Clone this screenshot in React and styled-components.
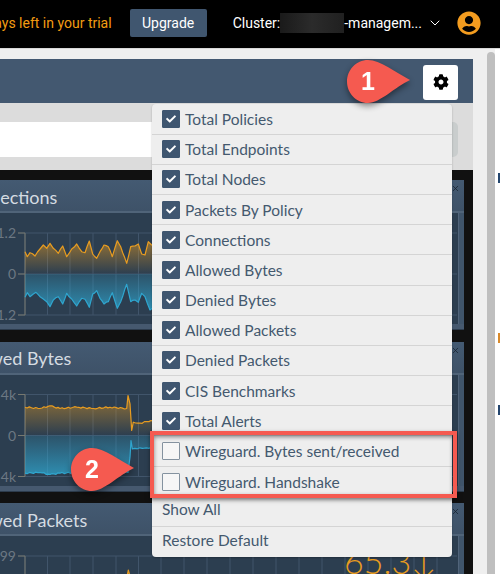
import styled, { createGlobalStyle } from 'styled-components';
import { FaCog, FaUserCircle, FaCheck } from 'react-icons/fa';
import { ChevronDown, X } from 'lucide-react';

const GlobalStyle = createGlobalStyle`
  html, body { margin: 0; padding: 0; background: #fff; }
  body { font-family: "Lato", "Noto Sans", sans-serif; }
`;

const connOrange = [[75,455],[82,470],[90,458],[105,468],[120,447],[130,435],[140,445],[150,430],[160,445],[175,460],[188,438],[200,470],[215,447],[230,432],[245,455],[255,458],[268,423],[278,462],[290,475],[300,455],[312,435],[325,440],[337,470],[352,422],[362,440],[380,490],[392,440],[405,438],[415,432],[425,462],[435,465],[445,425],[455,435],[480,450]];
const connBlue = [[75,592],[82,578],[90,590],[100,582],[108,577],[120,590],[130,597],[140,605],[150,620],[160,600],[175,590],[188,612],[200,580],[215,597],[230,618],[245,595],[255,598],[268,622],[278,582],[290,572],[300,595],[312,612],[325,605],[337,578],[352,625],[362,605],[380,553],[392,605],[405,600],[415,607],[425,580],[435,590],[450,630],[480,610]];
const bytesOrange = [[75,200],[120,204],[150,196],[180,204],[230,200],[280,204],[330,200],[380,204],[384,165],[390,190],[395,270],[400,245],[420,248],[440,243],[480,240]];
const bytesBlue = [[75,398],[120,396],[150,402],[180,398],[230,396],[280,398],[330,396],[384,396],[390,350],[393,300],[397,325],[420,322],[440,322],[480,320]];
const packetsOrange = [[75,718],[200,716],[380,716],[385,690],[392,716],[480,712]];

const menuItems = [
  'Total Policies', 'Total Endpoints', 'Total Nodes', 'Packets By Policy', 'Connections',
  'Allowed Bytes', 'Denied Bytes', 'Allowed Packets', 'Denied Packets', 'CIS Benchmarks', 'Total Alerts',
];

const gridXs = [25, 47.5, 70, 93, 116, 138.5, 161, 184, 207, 230, 253, 276, 299, 322, 345, 368, 391, 414, 437];

// series were read off a 3x crop, so they come in as crop coords
const toPoints = (raw, originY, jitter) => {
  const out = [];
  raw.forEach((p, i) => {
    const x = p[0] / 3;
    const y = originY + p[1] / 3;
    out.push([x, y]);
    const next = raw[i + 1];
    if (!next || next[0] - p[0] < 8) return;
    const steps = Math.floor((next[0] - p[0]) / 6);
    for (let s = 1; s < steps; s++) {
      const t = s / steps;
      const wobble = Math.sin(i * 7.3 + s * 2.1) * jitter;
      out.push([x + (t * (next[0] - p[0])) / 3, y + (t * (next[1] - p[1])) / 3 + wobble]);
    }
  });
  return out;
};

const Series = ({ raw, originY, mid, color, gradient, jitter }) => {
  const pts = toPoints(raw, originY, jitter);
  const line = pts.map((p) => p[0].toFixed(1) + ',' + p[1].toFixed(1)).join(' ');
  const area = `${pts[0][0].toFixed(1)},${mid} ${line} ${pts[pts.length - 1][0].toFixed(1)},${mid}`;
  return (
    <>
      <polygon points={area} fill={`url(#${gradient})`} />
      <polyline points={line} fill="none" stroke={color} strokeWidth="1.2" strokeLinejoin="round" />
    </>
  );
};

const Chart = ({ id, top, mid, bottom, height, label, bodyTop, series }) => {
  const lines = [top, mid, bottom].map((y) => y - bodyTop);
  const m = mid - bodyTop;
  return (
    <ChartSvg width="457" height={height} viewBox={`0 0 457 ${height}`}>
      <defs>
        <linearGradient id={id + 'o'} x1="0" x2="0" y1="0" y2="1">
          <stop offset="0" stopColor="#e59a1f" stopOpacity="0.55" />
          <stop offset="1" stopColor="#e59a1f" stopOpacity="0" />
        </linearGradient>
        <linearGradient id={id + 'b'} x1="0" x2="0" y1="0" y2="1">
          <stop offset="0" stopColor="#2fa6cf" stopOpacity="0.2" />
          <stop offset="1" stopColor="#2fa6cf" stopOpacity="0.75" />
        </linearGradient>
      </defs>
      {gridXs.map((x) => (
        <line key={x} x1={x} x2={x} y1={lines[0]} y2={lines[2]} stroke="#41556b" strokeWidth="1" />
      ))}
      {lines.map((y) => (
        <line key={y} x1="18" x2="457" y1={y} y2={y} stroke="#41556b" strokeWidth="1" />
      ))}
      <line x1="25" x2="25" y1={lines[0]} y2={lines[2]} stroke="#77786f" strokeWidth="1" />
      {lines.map((y) => (
        <line key={'t' + y} x1="18" x2="25" y1={y} y2={y} stroke="#77786f" strokeWidth="1" />
      ))}
      {series.map((s) => (
        <Series
          key={s.gradient}
          raw={s.raw}
          originY={s.origin - bodyTop}
          mid={m}
          color={s.color}
          gradient={id + s.gradient}
          jitter={s.jitter}
        />
      ))}
      <AxisText x="16" y={lines[0] + 5}>{label}</AxisText>
      <AxisText x="16" y={m + 5}>0</AxisText>
      <AxisText x="16" y={lines[2] + 5}>{label}</AxisText>
    </ChartSvg>
  );
};

const Panel = ({ title, shift, children, footer }) => (
  <PanelBox>
    <PanelTitle>
      <TitleText $shift={shift}>{title}</TitleText>
    </PanelTitle>
    <CloseBtn><X size={9} strokeWidth={2} /></CloseBtn>
    <PanelBody>{children}</PanelBody>
    {footer && <PanelFooter />}
  </PanelBox>
);

const Callout = ({ left, top, n }) => (
  <CalloutBox $left={left} $top={top}>
    <svg width="63" height="43" viewBox="0 0 63 43">
      <path d="M21 0C33 0 48 12 63 20C48 27 33 43 21 43C9 43 0 33 0 21.5C0 10 9 0 21 0Z" fill="#f55a50" />
    </svg>
    <CalloutNum>{n}</CalloutNum>
  </CalloutBox>
);

const MenuRow = ({ label, checked }) => (
  <Row>
    <Check $checked={checked}>{checked && <FaCheck size={10} color="#fff" />}</Check>
    <span>{label}</span>
  </Row>
);

export default function App() {
  return (
    <Page>
      <GlobalStyle />
      <TopBar>
        <TrialText>ays left in your trial</TrialText>
        <UpgradeBtn>Upgrade</UpgradeBtn>
        <Cluster>
          Cluster:<Redacted />-managem...
        </Cluster>
        <ChevronDown size={16} color="#fff" strokeWidth={1.5} />
        <Avatar><FaUserCircle size={24} color="#f39c1f" /></Avatar>
      </TopBar>
      <Body>
        <Main>
          <ActionBar>
            <GearBtn><FaCog size={16} color="#000" /></GearBtn>
          </ActionBar>
          <FilterBand>
            <SearchInput />
            <SearchBtn />
          </FilterBand>
          <Dashboard>
            <Panel title="Connections" shift={-42} footer>
              <Chart
                id="c1" top={233} mid={274} bottom={315} height={111} bodyTop={213} label="1.2"
                series={[
                  { raw: connOrange, origin: 100, color: '#e89c20', gradient: 'o', jitter: 0.6 },
                  { raw: connBlue, origin: 100, color: '#2fa6cf', gradient: 'b', jitter: 0.6 },
                ]}
              />
            </Panel>
            <Panel title="Allowed Bytes" shift={-42} footer>
              <Chart
                id="c2" top={394} mid={435} bottom={476} height={111} bodyTop={374.5} label="4k"
                series={[
                  { raw: bytesOrange, origin: 340, color: '#e89c20', gradient: 'o', jitter: 0.7 },
                  { raw: bytesBlue, origin: 340, color: '#2fa6cf', gradient: 'b', jitter: 0.7 },
                ]}
              />
            </Panel>
            <Panel title="Allowed Packets" shift={-42}>
              <Chart
                id="c3" top={556} mid={597} bottom={638} height={40} bodyTop={536} label="99"
                series={[{ raw: packetsOrange, origin: 340, color: '#e89c20', gradient: 'o', jitter: 0.5 }]}
              />
              <BigStat>65.3<StatArrow>↓</StatArrow></BigStat>
            </Panel>
          </Dashboard>
        </Main>
        <Gutter />
        <ScrollTrack><Thumb /></ScrollTrack>
        <EdgeStrip>
          <EdgeMark $top={173} $color="#24466e" />
          <EdgeMark $top={333} $color="#d98a2b" />
          <EdgeMark $top={405} $color="#24466e" />
        </EdgeStrip>
      </Body>

      <Menu>
        {menuItems.map((item) => (
          <MenuRow key={item} label={item} checked />
        ))}
        <HighlightGroup>
          <MenuRow label="Wireguard. Bytes sent/received" />
          <MenuRow label="Wireguard. Handshake" />
        </HighlightGroup>
        <Row $raised>Show All</Row>
        <Row $raised>Restore Default</Row>
      </Menu>

      <Callout left={347} top={60} n="1" />
      <Callout left={71} top={448} n="2" />
    </Page>
  );
}

const Page = styled.div`
  position: relative;
  width: 500px;
  height: 574px;
  overflow: hidden;
  display: flex;
  flex-direction: column;
`;

const TopBar = styled.div`
  height: 49px;
  box-sizing: border-box;
  flex: none;
  background: #000;
  border-bottom: 1px solid #d8d8d8;
  display: flex;
  align-items: center;
  justify-content: flex-end;
  padding: 0 19px 2px 0;
  font-family: "Roboto", sans-serif;
  font-size: 14px;
  color: #fff;
  white-space: nowrap;
  & > * { flex: none; }
`;

const TrialText = styled.span`
  color: #f39c12;
  margin-right: 18px;
`;

const UpgradeBtn = styled.div`
  width: 77px;
  height: 28px;
  background: #40566f;
  border-radius: 2px;
  display: flex;
  align-items: center;
  justify-content: center;
  margin-right: 26px;
`;

const Cluster = styled.div`
  display: flex;
  align-items: center;
  margin-right: 5px;
`;

const Redacted = styled.div`
  width: 64px;
  height: 20px;
  background: linear-gradient(90deg, #1a1a1a, #2b2b2b 50%, #202020);
`;

const Avatar = styled.div`
  margin-left: 14px;
  display: flex;
  align-items: center;
`;

const Body = styled.div`
  flex: 1;
  min-height: 0;
  display: flex;
  background: #efefef;
`;

const Main = styled.div`
  width: 473px;
  flex: none;
  padding-top: 10px;
  box-sizing: border-box;
  display: flex;
  flex-direction: column;
`;

const Gutter = styled.div`
  width: 14px;
  flex: none;
`;

const ScrollTrack = styled.div`
  width: 8px;
  flex: none;
  padding-top: 3px;
`;

const Thumb = styled.div`
  height: 100%;
  background: #bfbfbf;
  border-radius: 4px 4px 0 0;
`;

const EdgeStrip = styled.div`
  flex: 1;
  background: #fff;
  position: relative;
`;

const EdgeMark = styled.div`
  position: absolute;
  right: 0;
  width: 2px;
  height: 10px;
  top: ${(p) => p.$top - 49}px;
  background: ${(p) => p.$color};
`;

const ActionBar = styled.div`
  height: 44px;
  flex: none;
  background: #435870;
  display: flex;
  align-items: center;
  justify-content: flex-end;
  padding: 2px 15px 0 0;
  box-sizing: border-box;
`;

const GearBtn = styled.div`
  width: 35px;
  height: 35px;
  background: #fff;
  border-radius: 3px;
  display: flex;
  align-items: center;
  justify-content: center;
`;

const FilterBand = styled.div`
  height: 67px;
  flex: none;
  background: #dcdcdc;
  display: flex;
  align-items: center;
  padding: 5px 15px 0 0;
  box-sizing: border-box;
`;

const SearchInput = styled.div`
  flex: 1;
  height: 35px;
  background: #fff;
`;

const SearchBtn = styled.div`
  width: 26px;
  height: 35px;
  background: #c9cdcd;
  border-radius: 0 5px 5px 0;
`;

const Dashboard = styled.div`
  flex: 1;
  min-height: 0;
  background: #111;
  padding: 10px 9px 0 0;
  display: flex;
  flex-direction: column;
  gap: 11.5px;
  overflow: hidden;
`;

const PanelBox = styled.div`
  position: relative;
  flex: none;
  background: #40556b;
  padding-right: 5px;
  display: flex;
  flex-direction: column;
`;

const PanelTitle = styled.div`
  height: 33px;
  box-sizing: border-box;
  padding-top: 2px;
  margin-right: -5px;
  display: flex;
  align-items: center;
  overflow: hidden;
  background: linear-gradient(#445a72, #3e5268);
  border-bottom: 2px solid #506479;
`;

const TitleText = styled.span`
  font-size: 18px;
  color: #d5dce2;
  white-space: nowrap;
  margin-left: ${(p) => p.$shift}px;
`;

const CloseBtn = styled.div`
  position: absolute;
  top: 4px;
  right: 4px;
  color: #17222e;
  display: flex;
`;

const PanelBody = styled.div`
  position: relative;
  background: #2c3e50;
  border-right: 1px solid #51647a;
  display: flex;
`;

const PanelFooter = styled.div`
  height: 6px;
  box-sizing: border-box;
  margin-right: -5px;
  background: #46596f;
  border-bottom: 1px solid #2d3c4d;
`;

const ChartSvg = styled.svg`
  display: block;
  flex: none;
`;

const AxisText = styled.text`
  font-family: "Lato", sans-serif;
  font-size: 14px;
  fill: #6c7883;
  text-anchor: end;
`;

const BigStat = styled.div`
  position: absolute;
  left: 344px;
  top: 5px;
  font-family: "Lato", sans-serif;
  font-weight: 300;
  font-size: 34px;
  line-height: 40px;
  color: #e89c20;
  white-space: nowrap;
`;

const StatArrow = styled.span`
  font-size: 34px;
`;

const Menu = styled.div`
  position: absolute;
  left: 152px;
  top: 104.4px;
  width: 300px;
  background: #eeeeee;
  border-radius: 4px;
  box-shadow: 0 1px 2px rgba(0, 0, 0, 0.25);
  display: flex;
  flex-direction: column;
`;

const Row = styled.div`
  height: 30.2px;
  box-sizing: border-box;
  padding: 0 10px ${(p) => (p.$raised ? '4px' : '0')};
  display: flex;
  align-items: center;
  gap: 5px;
  font-size: 15.5px;
  color: #44596e;
  white-space: nowrap;
  border-bottom: 1px solid #d4d4d4;
  &:last-child { border-bottom: 0; }
`;

const Check = styled.div`
  width: 18px;
  height: 18px;
  box-sizing: border-box;
  border-radius: 1px;
  display: flex;
  align-items: center;
  justify-content: center;
  background: ${(p) => (p.$checked ? '#3f5670' : '#f6f6f6')};
  border: 1px solid ${(p) => (p.$checked ? '#3f5670' : '#84929f')};
`;

const HighlightGroup = styled.div`
  position: relative;
  &::after {
    content: "";
    position: absolute;
    left: -2px;
    right: -5px;
    top: -5px;
    bottom: -1px;
    border: 4px solid #f55a50;
    box-shadow: 0 2px 4px rgba(0, 0, 0, 0.5), inset 0 2px 4px rgba(0, 0, 0, 0.45);
    pointer-events: none;
  }
`;

const CalloutBox = styled.div`
  position: absolute;
  left: ${(p) => p.$left}px;
  top: ${(p) => p.$top}px;
  width: 63px;
  height: 43px;
  filter: drop-shadow(0 3px 3px rgba(0, 0, 0, 0.45));
  svg { display: block; }
`;

const CalloutNum = styled.span`
  position: absolute;
  left: 0;
  top: 0;
  width: 42px;
  line-height: 43px;
  text-align: center;
  font-family: "Liberation Sans", Arial, sans-serif;
  font-weight: 700;
  font-size: 25px;
  color: #fff;
`;
